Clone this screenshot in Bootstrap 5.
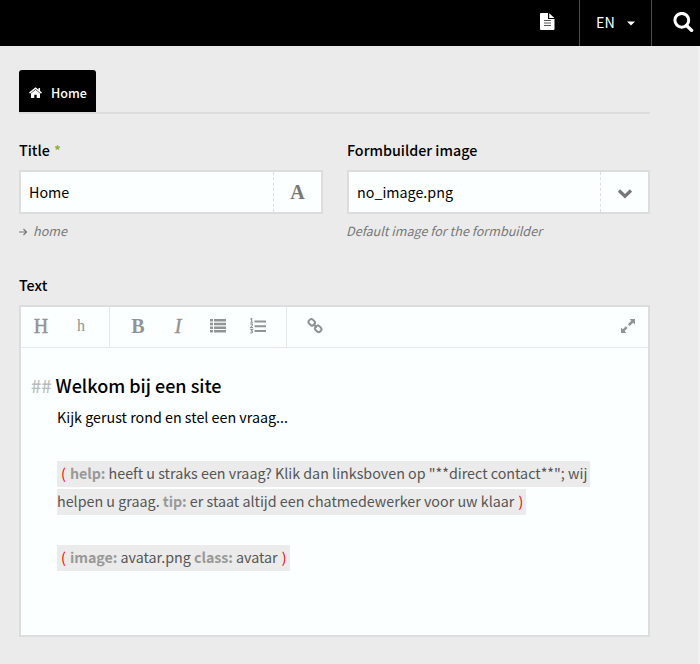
<!DOCTYPE html>
<html lang="nl">
<head>
<meta charset="utf-8">
<meta name="viewport" content="width=device-width, initial-scale=1">
<title>Home</title>
<link href="https://cdn.jsdelivr.net/npm/bootstrap@5.3.0/dist/css/bootstrap.min.css" rel="stylesheet">
<style>
body{background:#ebebeb;color:#000;font-family:"Noto Sans CJK SC",sans-serif;font-size:14.3px;line-height:24px;height:664px;overflow:hidden}
svg{display:block;fill:currentColor}
.topbar{height:46px}
.topbar .cell{height:46px;border-left:1px solid #4d4d4d}
.lang{width:72px;padding-left:16px}
.lang span{padding-bottom:2px}
.find{width:49px;padding-left:21px;padding-bottom:2px}
.doc{margin-right:24px;margin-bottom:3px}
.page{height:618px;padding:24px 48px 0 19px;border-right:2px solid #f2f2f2}
.tabs{height:44px;border-bottom:2px solid #ddd}
.tab{width:77px;height:42px;border-radius:3px 3px 0 0;padding:3px 0 0 10px;font-size:12.5px;font-weight:500}
.tab span{margin-left:9px}
.fields{gap:24px;margin-top:24px}
.label{font-weight:500;line-height:24px;margin-bottom:8px;height:24px}
.star{color:#8dae28;margin-left:1px}
.box{height:44px;border:2px solid #ddd;background:#fbffff}
.box .value{padding-left:8px}
.box .side{width:48px;border-left:1px dashed #ddd;color:#777}
.serif{font-family:"Liberation Serif",serif}
.hint{color:#777;font-style:italic;font-size:12.6px;line-height:20px;margin:7px 0 0 -1px;height:20px}
.hint svg{margin:2px 0 0 1px}
.hint svg+span{margin-left:5px}
.editor{width:631px;height:332px;border:2px solid #ddd;background:#fbffff}
.tools{height:41px;border-bottom:1px solid #e6e8e8;color:#919494}
.tools .group{height:40px;border-right:1px solid #e6e8e8}
.tool{width:40px;height:38px}
.slab{-webkit-text-stroke:.45px currentColor}
.content{padding:24px 20px 0 36px;line-height:28px}
.heading{font-size:18px;font-weight:500;line-height:28px;margin:-1px 0 1px -26px;height:31px}
.hash{color:#b9bcbc}
.tag{background:#ebebeb;color:#555;padding:1px 3px 4px 4px}
.tag b{color:#999;font-weight:700;letter-spacing:-.1px}
.tag i{color:#f00;font-style:normal;margin-right:1px}
.tag i:last-child{margin:0 0 0 1px}
.tag .eol{padding-right:3px}
</style>
<script src="https://cdn.jsdelivr.net/npm/bootstrap@5.3.0/dist/js/bootstrap.bundle.min.js"></script>
</head>
<body>
<header class="topbar d-flex justify-content-end align-items-center bg-black text-white">
  <svg class="doc" width="15" height="17" viewBox="0 0 15 17"><path d="M.9 0H8v6h6.500v10a1 1 0 0 1-1 1H.9a.9.9 0 0 1-.9-.9V.9A.9.9 0 0 1 .9 0z"/><path d="M9.200.2 14.500 5H9.200z"/><path d="M4 7.500h7M4 10h7M4 12.500h7" stroke="#555" stroke-width="1"/></svg>
  <div class="cell lang d-flex align-items-center"><span>EN</span><svg class="ms-auto me-3" width="8" height="5" viewBox="0 0 8 5"><path d="M0 .5h8l-4 4z"/></svg></div>
  <div class="cell find d-flex align-items-center"><svg width="21" height="20" viewBox="0 0 21 20"><circle cx="8.800" cy="8.300" r="6.900" fill="none" stroke="#fff" stroke-width="3"/><path d="m13.500 13.500 5.200 5" stroke="#fff" stroke-width="3.200" stroke-linecap="round"/></svg></div>
</header>
<main class="page">
  <nav class="tabs">
    <div class="tab bg-black text-white d-flex align-items-center"><svg width="13" height="12" viewBox="0 0 13 12"><path d="M6.500 2.800 11 6.500v4a.6.6 0 0 1-.6.6H7.700V7.800H5.300v3.300H2.600a.6.6 0 0 1-.6-.6v-4z"/><path d="M.5 6.200 6.500 1.200l6 5M10.300 1v3.500" fill="none" stroke="#fff" stroke-width="1.500"/></svg><span>Home</span></div>
  </nav>
  <div class="fields d-flex">
    <div style="width:304px">
      <div class="label">Title <span class="star">*</span></div>
      <div class="box d-flex align-items-stretch"><div class="value flex-grow-1 d-flex align-items-center">Home</div><div class="side serif d-flex align-items-center justify-content-center fw-bold fs-5">A</div></div>
      <div class="hint d-flex align-items-center"><svg width="9" height="8" viewBox="0 0 9 8"><path d="M0 4h7.500M4.500 1l3 3-3 3" fill="none" stroke="#777" stroke-width="1.200"/></svg><span>home</span></div>
    </div>
    <div style="width:303px">
      <div class="label">Formbuilder image</div>
      <div class="box d-flex align-items-stretch"><div class="value flex-grow-1 d-flex align-items-center">no_image.png</div><div class="side d-flex align-items-center justify-content-center"><svg class="mt-1" width="16" height="10" viewBox="0 0 16 10"><path d="m2 1.500 6 5.700 6-5.700" fill="none" stroke="#777" stroke-width="3.200"/></svg></div></div>
      <div class="hint">Default image for the formbuilder</div>
    </div>
  </div>
  <div class="label mt-4 pt-2 h-auto">Text</div>
  <section class="editor">
    <div class="tools d-flex">
      <div class="group d-flex" style="width:89px">
        <div class="tool serif slab d-flex align-items-center justify-content-center fs-5">H</div>
        <div class="tool serif d-flex align-items-center justify-content-center fs-6">h</div>
      </div>
      <div class="group d-flex ps-2" style="width:177px">
        <div class="tool serif d-flex align-items-center justify-content-center fs-5 fw-bold">B</div>
        <div class="tool serif slab d-flex align-items-center justify-content-center fs-5 fst-italic">I</div>
        <div class="tool d-flex align-items-center justify-content-center"><svg width="16" height="14" viewBox="0 0 16 14"><path d="M0 0h3v2.500H0zM4 0h12v2.500H4zM0 3.700h3v2.500H0zM4 3.700h12v2.500H4zM0 7.400h3v2.500H0zM4 7.400h12v2.500H4zM0 11.100h3v2.500H0zM4 11.100h12v2.500H4z"/></svg></div>
        <div class="tool d-flex align-items-center justify-content-center"><svg width="16" height="16" viewBox="0 0 16 16"><path d="M4.500 2.500H16v2H4.500zM4.500 7.300H16v2H4.500zM4.500 12H16v2H4.500z"/><path d="M.3 1.300 1.700.5V4M.3 4.300h2.700M.3 6.300c2.600-1.200 3.200.5.2 3.300H3M.3 11.500h2.300l-1.200 1.500c2 0 1.500 2.500-1.200 1.900" fill="none" stroke="currentColor" stroke-width="1.100"/></svg></div>
      </div>
      <div class="tool d-flex align-items-center justify-content-center ms-2"><svg width="16" height="16" viewBox="0 0 16 16"><g fill="none" stroke="currentColor" stroke-width="2"><rect x="1.500" y="1.600" width="6.500" height="5.400" rx="2.500" transform="rotate(45 4.700 4.300)"/><rect x="8" y="8.100" width="6.500" height="5.400" rx="2.500" transform="rotate(45 11.200 10.800)"/><path d="m6 6 4 3.500"/></g></svg></div>
      <div class="tool d-flex align-items-center justify-content-center ms-auto"><svg width="14" height="14" viewBox="0 0 14 14"><path d="M8.500 0H14v5.500L12.200 3.700 8.700 7.100 6.900 5.300l3.400-3.500zM5.500 14H0V8.500l1.800 1.800 3-3 1.800 1.800-3 3z"/></svg></div>
    </div>
    <div class="content">
      <div class="heading"><span class="hash">##</span> Welkom bij een site</div>
      <div>Kijk gerust rond en stel een vraag...</div>
      <div class="mt-4 pt-1"><span class="tag"><i>(</i> <b>help:</b> heeft u straks een vraag? Klik dan linksboven op "**direct contact**"; <span class="eol">wij</span><br>helpen u graag. <b>tip:</b> er staat altijd een chatmedewerker voor uw klaar <i>)</i></span></div>
      <div class="mt-4 pt-1"><span class="tag"><i>(</i> <b>image:</b> avatar.png <b>class:</b> avatar <i>)</i></span></div>
    </div>
  </section>
</main>
</body>
</html>
